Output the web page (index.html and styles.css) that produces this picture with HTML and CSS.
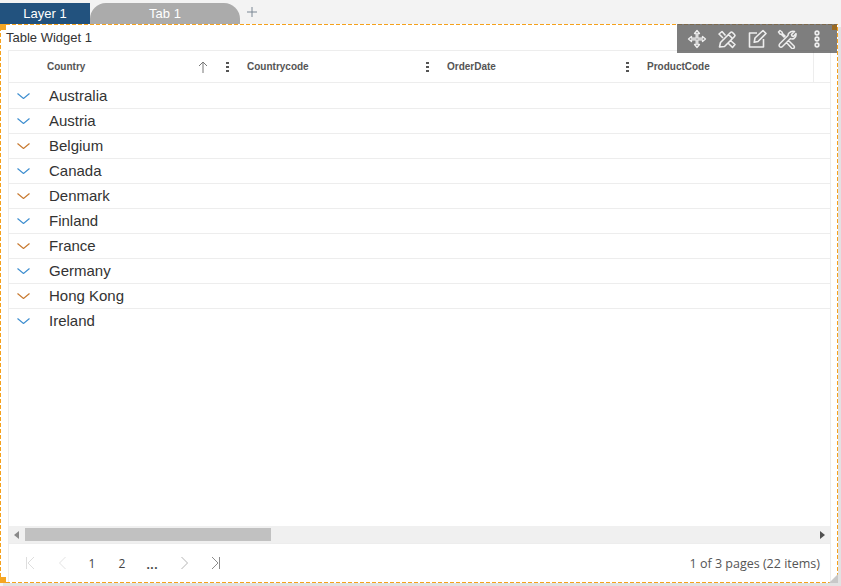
FILE: index.html
```html
<!DOCTYPE html>
<html>
<head>
	<meta charset="UTF-8">
	<title>Table Widget</title>
	<link rel="stylesheet" href="styles.css">
</head>
<body>
	<div class="tabs">
		<div class="layer-tab">Layer 1</div>
		<div class="tab">Tab 1</div>
		<svg class="add" width="10" height="10" viewBox="0 0 10 10"><path d="M5 0v10M0 5h10" stroke="#7a8794" fill="none"/></svg>
	</div>
	<div class="widget">
		<span class="handle handle-tl"></span>
		<span class="handle handle-bl"></span>
		<svg class="resize" width="9" height="9" viewBox="0 0 9 9"><path d="M9 0v9H0z" fill="#c8c8c8"/></svg>

		<!-- widget actions, shown over the table -->
		<div class="toolbar">
			<span class="handle handle-tr"></span>
			<svg width="20" height="20" viewBox="0 0 20 20" fill="none" stroke="#eee" stroke-width="1.300" stroke-linejoin="round"><path d="M10 1.500 7.500 4.500h1.700v4.700H4.500V7.500L1.500 10l3 2.500v-1.700h4.700v4.700H7.500l2.500 3 2.500-3h-1.700v-4.700h4.700v1.700l3-2.500-3-2.500v1.700h-4.700V4.500h1.700z"/></svg>
			<svg width="20" height="20" viewBox="0 0 20 20" fill="none" stroke="#eee" stroke-width="1.600" stroke-linejoin="round"><path d="M2.500 18 3.500 13.500 13.500 3.500Q14.500 2.500 15.500 3.500L17.500 5.500Q18.500 6.500 17.500 7.500L7.500 17.500zM11.500 5.500l3.500 3.500M8.500 6.500 5 2.500 2 5l4 4M13.500 11.500l4.500 4-2.500 3-4-4"/></svg>
			<svg width="20" height="20" viewBox="0 0 20 20" fill="none" stroke="#eee" stroke-width="1.600" stroke-linejoin="round"><path d="M10 4H2.500v14h14v-8M8 9l8-7.500 3 3-8 8-3.800.8z"/></svg>
			<svg width="20" height="20" viewBox="0 0 20 20" fill="none" stroke="#eee" stroke-width="1.500" stroke-linejoin="round"><path d="M12 4Q14.500 1.500 17.500 2.500L14.500 5.500 15 7 16.500 7.500 19 4.500Q19.500 8 17 9.500 15 10.500 13.500 9.500L5.500 17.500Q4 19 2.500 17.500 1.500 16 3 14.500L11 6.500Q11 5 12 4zM7.500 8.500 4.500 5.500 3 5 1.500 3 3 1.500 5 3 5.500 4.500 8.500 7.500M11.500 11.500l5.500 5.500q1 1.500-.5 2.500-1 .5-2-.5L9.500 13.500"/></svg>
			<svg width="20" height="20" viewBox="0 0 20 20" fill="none" stroke="#eee" stroke-width="1.700"><circle cx="10" cy="4" r="1.800"/><circle cx="10" cy="10" r="1.800"/><circle cx="10" cy="16" r="1.800"/></svg>
		</div>

		<div class="title">Table Widget 1</div>
		<div class="grid">
			<div class="head">
				<div class="head-cell">
					<span class="head-label">Country</span>
					<svg class="sort" width="10" height="12" viewBox="0 0 10 12" fill="none" stroke="#777"><path d="M5 12V1M1 5l4-4 4 4"/></svg>
					<span class="dots"><i></i><i></i><i></i></span>
				</div>
				<div class="head-cell">
					<span class="head-label">Countrycode</span>
					<span class="dots"><i></i><i></i><i></i></span>
				</div>
				<div class="head-cell">
					<span class="head-label">OrderDate</span>
					<span class="dots"><i></i><i></i><i></i></span>
				</div>
				<div class="head-cell last">
					<span class="head-label">ProductCode</span>
				</div>
			</div>
			<div class="rows">
				<div class="row"><svg class="blue" width="13" height="6" viewBox="0 0 13 6"><path d="M.5.5 6.500 5.500 12.500.5"/></svg><span>Australia</span></div>
				<div class="row"><svg class="blue" width="13" height="6" viewBox="0 0 13 6"><path d="M.5.5 6.500 5.500 12.500.5"/></svg><span>Austria</span></div>
				<div class="row"><svg class="orange" width="13" height="6" viewBox="0 0 13 6"><path d="M.5.5 6.500 5.500 12.500.5"/></svg><span>Belgium</span></div>
				<div class="row"><svg class="blue" width="13" height="6" viewBox="0 0 13 6"><path d="M.5.5 6.500 5.500 12.500.5"/></svg><span>Canada</span></div>
				<div class="row"><svg class="orange" width="13" height="6" viewBox="0 0 13 6"><path d="M.5.5 6.500 5.500 12.500.5"/></svg><span>Denmark</span></div>
				<div class="row"><svg class="blue" width="13" height="6" viewBox="0 0 13 6"><path d="M.5.5 6.500 5.500 12.500.5"/></svg><span>Finland</span></div>
				<div class="row"><svg class="orange" width="13" height="6" viewBox="0 0 13 6"><path d="M.5.5 6.500 5.500 12.500.5"/></svg><span>France</span></div>
				<div class="row"><svg class="blue" width="13" height="6" viewBox="0 0 13 6"><path d="M.5.5 6.500 5.500 12.500.5"/></svg><span>Germany</span></div>
				<div class="row"><svg class="orange" width="13" height="6" viewBox="0 0 13 6"><path d="M.5.5 6.500 5.500 12.500.5"/></svg><span>Hong Kong</span></div>
				<div class="row last"><svg class="blue" width="13" height="6" viewBox="0 0 13 6"><path d="M.5.5 6.500 5.500 12.500.5"/></svg><span>Ireland</span></div>
			</div>
			<div class="scrollbar">
				<svg width="5" height="8" viewBox="0 0 5 8"><path d="M5 0v8L0 4z" fill="#8a8a8a"/></svg>
				<div class="track"><div class="thumb"></div></div>
				<svg width="5" height="8" viewBox="0 0 5 8"><path d="M0 0v8l5-4z" fill="#505050"/></svg>
			</div>
			<div class="pager">
				<div class="pages">
					<svg class="nav p-first" width="8" height="12" viewBox="0 0 8 12" stroke="#dedede"><path d="M.5 0v12M8 0 2 6l6 6"/></svg>
					<svg class="nav p-prev" width="7" height="12" viewBox="0 0 7 12" stroke="#e2e2e2"><path d="M6.500 0 .5 6l6 6"/></svg>
					<span class="num">1</span>
					<span class="num">2</span>
					<span class="num more">...</span>
					<svg class="nav p-next" width="7" height="12" viewBox="0 0 7 12" stroke="#b4b4b4"><path d="M.5 0l6 6-6 6"/></svg>
					<svg class="nav p-last" width="8" height="12" viewBox="0 0 8 12" stroke="#8c8c8c"><path d="M7.500 0v12M0 0l6 6-6 6"/></svg>
				</div>
				<div class="count">1 of 3 pages (22 items)</div>
			</div>
		</div>
	</div>
</body>
</html>
```
FILE: styles.css
```css
html, body {
	margin: 0;
	padding: 0;
	height: 586px;
	overflow: hidden;
	background: #f3f3f3;
	font-family: "Liberation Sans", Arial, sans-serif;
}
.tabs {
	display: flex;
	align-items: flex-end;
	height: 24px;
}
.layer-tab {
	width: 90px;
	height: 21px;
	line-height: 22px;
	background: #22527e;
	color: #fff;
	font-size: 13px;
	text-align: center;
}
.tab {
	width: 150px;
	height: 21px;
	line-height: 22px;
	background: #ababab;
	border-radius: 16px 16px 0 0;
	color: #fff;
	font-size: 13px;
	text-align: center;
}
.add {
	margin: 0 0 7px 7px;
}

/* widget frame: the dashes are gradients so their length can be set */
.widget {
	position: relative;
	box-sizing: border-box;
	width: 838px;
	height: 559px;
	padding: 1px 7px 1px 8px;
	display: flex;
	flex-direction: column;
	box-shadow: 3px 3px 0 #e2e2e2;
	background:
		repeating-linear-gradient(90deg, #f5a11c 0 4px, transparent 4px 6px) 0 0 / 100% 1px no-repeat,
		repeating-linear-gradient(90deg, #f5a11c 0 4px, transparent 4px 6px) 0 100% / 100% 1px no-repeat,
		repeating-linear-gradient(0deg, #f5a11c 0 4px, transparent 4px 6px) 0 0 / 1px 100% no-repeat,
		repeating-linear-gradient(0deg, #f5a11c 0 4px, transparent 4px 6px) 100% 0 / 1px 100% no-repeat,
		#fff;
}
.handle {
	position: absolute;
	width: 6px;
	height: 6px;
	background: #f5a623;
}
.handle-tl { left: 0; top: 0; }
.handle-bl { left: 0; bottom: 0; }
.handle-tr { right: 0; top: 1px; width: 5px; height: 5px; background: #9a6a22; }
.resize {
	position: absolute;
	right: 0;
	bottom: 0;
}
.toolbar {
	position: absolute;
	right: 1px;
	top: 0;
	width: 160px;
	height: 29px;
	background: rgba(90, 90, 90, .78);
	display: flex;
	align-items: center;
	justify-content: space-between;
	padding: 0 10px;
	box-sizing: border-box;
}
.title {
	height: 25px;
	line-height: 25px;
	font-size: 13px;
	color: #333;
	margin-left: -2px;
}

/* grid */
.grid {
	flex: 1;
	display: flex;
	flex-direction: column;
	border: solid #ededed;
	border-width: 1px 1px 0 1px;
	min-height: 0;
}
.head {
	display: flex;
	height: 32px;
	border-bottom: 1px solid #ededed;
	flex: none;
	padding-left: 38px;
	padding-right: 16px;
	box-sizing: border-box;
}
.head-cell {
	display: flex;
	align-items: center;
	width: 200px;
	box-sizing: border-box;
	color: #555;
	font-size: 10px;
	font-weight: bold;
}
.head-cell.last {
	flex: 1;
	border-right: 1px solid #ededed;
}
.head-label {
	flex: 1;
}
.sort {
	margin-right: 18px;
}
.dots {
	display: flex;
	flex-direction: column;
	gap: 2px;
	width: 3px;
	margin-right: 18px;
}
.dots i {
	display: block;
	width: 3px;
	height: 2px;
	background: #555;
}
.rows {
	flex: 1;
	padding-top: 1px;
}
.row {
	display: flex;
	align-items: center;
	height: 23px;
	padding-bottom: 1px;
	border-bottom: 1px solid #ededed;
	font-size: 15px;
	color: #333;
	padding-left: 8px;
}
.row.last {
	border-bottom: none;
}
.row span {
	margin-left: 19px;
}
.row svg {
	fill: none;
	stroke-width: 1.200;
}
.row .blue {
	stroke: #3f8fd0;
}
.row .orange {
	stroke: #c87a30;
}
.scrollbar {
	display: flex;
	align-items: center;
	height: 17px;
	background: #f0f0f0;
	padding: 0 5px;
	gap: 6px;
	flex: none;
}
.track {
	flex: 1;
	height: 13px;
}
.thumb {
	width: 246px;
	height: 13px;
	background: #c1c1c1;
}
.pager {
	display: flex;
	align-items: center;
	justify-content: space-between;
	height: 39px;
	border-top: 1px solid #ededed;
	box-sizing: border-box;
	flex: none;
	padding: 0 10px 0 17px;
}
.pages {
	display: flex;
	align-items: center;
}
.nav {
	fill: none;
}
.p-prev { margin-left: 25px; }
.p-next { margin-left: 14px; }
.p-last { margin-left: 24px; }
.num {
	width: 30px;
	text-align: center;
	font-family: "Open Sans", sans-serif;
	font-size: 12px;
	color: #444;
	margin-top: 1px;
}
.p-prev + .num {
	margin-left: 11px;
}
.more {
	font-size: 14px;
	font-weight: 600;
}
.count {
	font-family: "Open Sans", sans-serif;
	font-size: 12.500px;
	color: #555;
}
```
